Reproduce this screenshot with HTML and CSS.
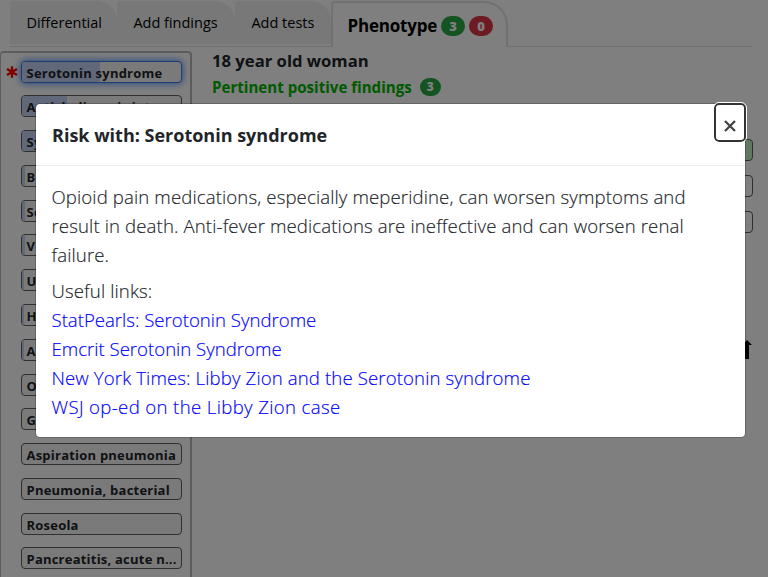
FILE: index.html
```
<!DOCTYPE html>
<html lang="en">
    <head>
        <meta charset="utf-8">
        <title>Differential diagnosis</title>
        <link rel="stylesheet" href="styles.css">
    </head>
    <body>
        <div class="page">
            <nav class="tabs">
                <a class="tab tab-differential"><span>Differential</span></a>
                <a class="tab tab-findings"><span>Add findings</span></a>
                <a class="tab tab-tests"><span>Add tests</span></a>
                <a class="tab active"><span>Phenotype</span> <b class="badge green">3</b> <b class="badge red">0</b></a>
            </nav>
            <div class="main">
                <div class="diseases">
                    <div class="disease selected"><i style="width: 49%"></i><span>Serotonin syndrome</span>
                        <svg class="star" width="12" height="12" viewBox="0 0 12 12"><path d="M6 .3v11.4M1 3l10 6M11 3L1 9" stroke="#ff0000" stroke-width="2.4"/></svg>
                    </div>
                    <div class="disease"><i style="width: 28%"></i><span>Anticholinergic intox...</span></div>
                    <div class="disease"><i style="width: 20%"></i><span>Sy</span></div>
                    <div class="disease"><i style="width: 2%"></i><span>B</span></div>
                    <div class="disease"><i style="width: 2%"></i><span>Se</span></div>
                    <div class="disease"><i style="width: 2%"></i><span>V</span></div>
                    <div class="disease"><i style="width: 1%"></i><span>U</span></div>
                    <div class="disease"><i style="width: 1%"></i><span>H</span></div>
                    <div class="disease"><i style="width: 1%"></i><span>A</span></div>
                    <div class="disease"><span>O</span></div>
                    <div class="disease"><span>G</span></div>
                    <div class="disease"><span>Aspiration pneumonia</span></div>
                    <div class="disease"><span>Pneumonia, bacterial</span></div>
                    <div class="disease"><span>Roseola</span></div>
                    <div class="disease"><span>Pancreatitis, acute n...</span></div>
                </div>
                <div class="patient">
                    <h2>18 year old woman</h2>
                    <h3><span>Pertinent positive findings</span> <b class="badge green small">3</b></h3>
                    <div class="findings">
                        <div class="finding present"></div>
                        <div class="finding"></div>
                        <div class="finding"></div>
                    </div>
                    <svg class="arrow" width="14" height="20" viewBox="0 0 14 20"><path d="M7 0l5 5h-3v14h-4v-14h-3z"/></svg>
                </div>
            </div>
        </div>

        <div class="backdrop">
            <div class="modal">
                <div class="modal-header">
                    <h5>Risk with: Serotonin syndrome</h5>
                    <button class="close">
                        <svg width="12" height="12" viewBox="0 0 12 12"><path d="M1 1l10 10M11 1L1 11" stroke="#444" stroke-width="2.3"/></svg>
                    </button>
                </div>
                <div class="modal-body">
                    <p>Opioid pain medications, especially meperidine, can worsen symptoms and<br>
                    result in death. Anti-fever medications are ineffective and can worsen renal<br>
                    failure.</p>
                    <p>Useful links:<br>
                    <a class="tight">StatPearls: Serotonin Syndrome</a><br>
                    <a class="tight">Emcrit Serotonin Syndrome</a><br>
                    <a>New York Times: Libby Zion and the Serotonin syndrome</a><br>
                    <a class="wide">WSJ op-ed on the Libby Zion case</a></p>
                </div>
            </div>
        </div>
    </body>
</html>
```

FILE: styles.css
```
*{
    box-sizing: border-box;
}
body{
    margin: 0;
    height: 577px;
    overflow: hidden;
    font-family: "Open Sans", "Noto Sans", sans-serif;
    color: #212529;
    background: #fff;
}
.page{
    height: 577px;
    overflow: hidden;
}

/* tabs */
.tabs{
    display: flex;
    align-items: flex-start;
    width: 743px;
    height: 47px;
    margin-left: 10px;
    padding-top: 1px;
    border-bottom: 1px solid #dee2e6;
}
.tab{
    height: 43px;
    padding-left: 16.4px;
    line-height: 43px;
    font-size: 14.5px;
    color: #000;
    background: #f0f0f0;
    border-radius: 3px 20px 0 0;
    white-space: nowrap;
}
.tab-differential{
    width: 107px;
}
.tab-findings{
    width: 118px;
}
.tab-tests{
    width: 96px;
}
.tab.active{
    display: flex;
    align-items: center;
    width: 177px;
    height: 46px;
    padding: 1px 0 0 14.5px;
    font-size: 17px;
    font-weight: 700;
    background: #fff;
    border: 2px solid #dee2e6;
    border-bottom: 0;
    border-radius: 4px 24px 0 0;
}
.tab.active span{
    letter-spacing: -0.2px;
}
.badge{
    display: inline-block;
    width: 24px;
    height: 20px;
    margin-left: 4px;
    border-radius: 10px;
    font-size: 13px;
    line-height: 20px;
    text-align: center;
    color: #fff;
}
.green{
    background: #28a745;
}
.red{
    background: #dc3545;
}
.small{
    width: 21px;
    height: 18px;
    margin-left: 8px;
    font-size: 12px;
    line-height: 18px;
}

/* differential list */
.main{
    display: flex;
    margin-top: 4px;
}
.diseases{
    flex: none;
    width: 192px;
    height: 560px;
    padding: 7.5px 8px 0 20px;
    border: 2px solid #b8b8b8;
    border-left-width: 1px;
    border-radius: 4px;
}
.disease{
    position: relative;
    width: 161px;
    height: 22px;
    margin-bottom: 12.79px;
    padding-left: 4.5px;
    border: 1px solid #606060;
    border-radius: 4px;
    background: #f4f4f4;
    font-size: 13px;
    font-weight: 700;
    line-height: 22px;
    letter-spacing: 0.22px;
    white-space: nowrap;
}
.disease i{
    position: absolute;
    left: 0;
    top: 0;
    height: 20px;
    background: #c3d0f3;
    border-radius: 3px 0 0 3px;
}
.disease span{
    position: relative;
}
.selected{
    border-color: #3a7bea;
    box-shadow: 0 0 7px 1px #5b96f5;
}
.star{
    position: absolute;
    left: -16px;
    top: 4px;
}
.patient{
    flex: none;
    width: 541px;
    margin-left: 20px;
}
h2, h3{
    margin: 0;
    font-weight: 700;
}
h2{
    height: 24px;
    margin-top: -2px;
    font-size: 16.65px;
    line-height: 24px;
}
h3{
    display: flex;
    align-items: center;
    height: 28px;
    font-size: 15.1px;
    color: #00b400;
}
.findings{
    margin-top: 38px;
}
.finding{
    height: 22px;
    margin-bottom: 14px;
    border: 1px solid #606060;
    border-radius: 4px;
}
.present{
    background: #c3f3c3;
}
.arrow{
    display: block;
    margin: 107px 0 0 528px;
}

/* modal */
.backdrop{
    position: absolute;
    top: 0;
    left: 0;
    width: 768px;
    height: 577px;
    padding: 103px 0 0 35px;
    background: rgba(0, 0, 0, 0.5);
}
.modal{
    width: 711px;
    height: 335px;
    background: #fff;
    background-clip: padding-box;
    border: 1px solid rgba(0, 0, 0, 0.2);
    border-radius: 5px;
}
.modal-header{
    display: flex;
    justify-content: space-between;
    height: 62px;
    padding-left: 16px;
    border-bottom: 1px solid #e9ecef;
}
h5{
    margin: 0;
    font-size: 18px;
    font-weight: 700;
    line-height: 62px;
}
.close{
    width: 32px;
    height: 39px;
    margin: -1px -1px 0 0;
    padding: 7px 0 0;
    border: 2px solid #333;
    border-radius: 5px;
    background: #fff;
    outline: 1px solid #fff;
}
.close svg{
    display: block;
    margin: 0 auto;
}
.modal-body{
    padding: 17px 15.5px;
    font-size: 18.6px;
    font-weight: 300;
    line-height: 28.8px;
    letter-spacing: 0.12px;
    white-space: nowrap;
    /* keeps the light weight readable */
    -webkit-text-stroke: 0.15px;
}
p{
    margin: 0 0 8px;
}
.modal-body a{
    color: #0000ff;
}
.modal-body .tight{
    letter-spacing: 0;
}
.modal-body .wide{
    letter-spacing: 0.36px;
}
```
